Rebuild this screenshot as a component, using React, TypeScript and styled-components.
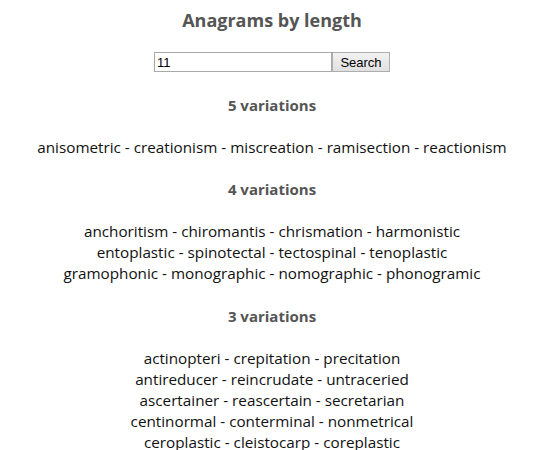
import React from "react";
import styled, { createGlobalStyle } from "styled-components";

const Global = createGlobalStyle`
  html, body { margin: 0; padding: 0; background: #fff; }
  body { font-family: "Open Sans", "Noto Sans", sans-serif; }
`;

const Page = styled.div`
  display: flex;
  flex-direction: column;
  align-items: center;
  padding-top: 8px;
  text-align: center;
`;

const Title = styled.h1`
  margin: 0;
  font-size: 18px;
  line-height: 24px;
  font-weight: 700;
  color: #555;
`;

const SearchForm = styled.form`
  display: flex;
  margin-top: 20px;
  margin-bottom: 23px;
`;

const Input = styled.input`
  box-sizing: border-box;
  width: 178px;
  height: 20px;
  padding: 1px 2px;
  border: 1px solid #a9a9a9;
  font-family: "Liberation Sans", Arial, sans-serif;
  font-size: 13px;
  color: #000;
  outline: none;
`;

const Button = styled.button`
  box-sizing: border-box;
  width: 58px;
  height: 20px;
  padding: 0;
  border: 1px solid #adadad;
  background: linear-gradient(#f2f2f2, #e0e0e0);
  font-family: "Liberation Sans", Arial, sans-serif;
  font-size: 13px;
  color: #000;
`;

const Heading = styled.h2`
  margin: 0 0 21px;
  font-size: 15px;
  line-height: 21.1px;
  font-weight: 700;
  color: #555;
`;

const Words = styled.div`
  margin: 0 0 21px;
  font-size: 15.25px;
  line-height: 21.1px;
  color: #111;
`;

const Line = styled.div`
  white-space: nowrap;
`;

const groups: { n: number; lines: string[][] }[] = [
  {
    n: 5,
    lines: [["anisometric", "creationism", "miscreation", "ramisection", "reactionism"]],
  },
  {
    n: 4,
    lines: [
      ["anchoritism", "chiromantis", "chrismation", "harmonistic"],
      ["entoplastic", "spinotectal", "tectospinal", "tenoplastic"],
      ["gramophonic", "monographic", "nomographic", "phonogramic"],
    ],
  },
  {
    n: 3,
    lines: [
      ["actinopteri", "crepitation", "precitation"],
      ["antireducer", "reincrudate", "untraceried"],
      ["ascertainer", "reascertain", "secretarian"],
      ["centinormal", "conterminal", "nonmetrical"],
      ["ceroplastic", "cleistocarp", "coreplastic"],
    ],
  },
];

export default function App() {
  return (
    <>
      <Global />
      <Page>
        <Title>Anagrams by length</Title>
        <SearchForm onSubmit={(e) => e.preventDefault()}>
          <Input defaultValue="11" />
          <Button type="submit">Search</Button>
        </SearchForm>
        {groups.map((g) => (
          <React.Fragment key={g.n}>
            <Heading>{g.n} variations</Heading>
            <Words>
              {g.lines.map((l, i) => (
                <Line key={i}>{l.join(" - ")}</Line>
              ))}
            </Words>
          </React.Fragment>
        ))}
      </Page>
    </>
  );
}
